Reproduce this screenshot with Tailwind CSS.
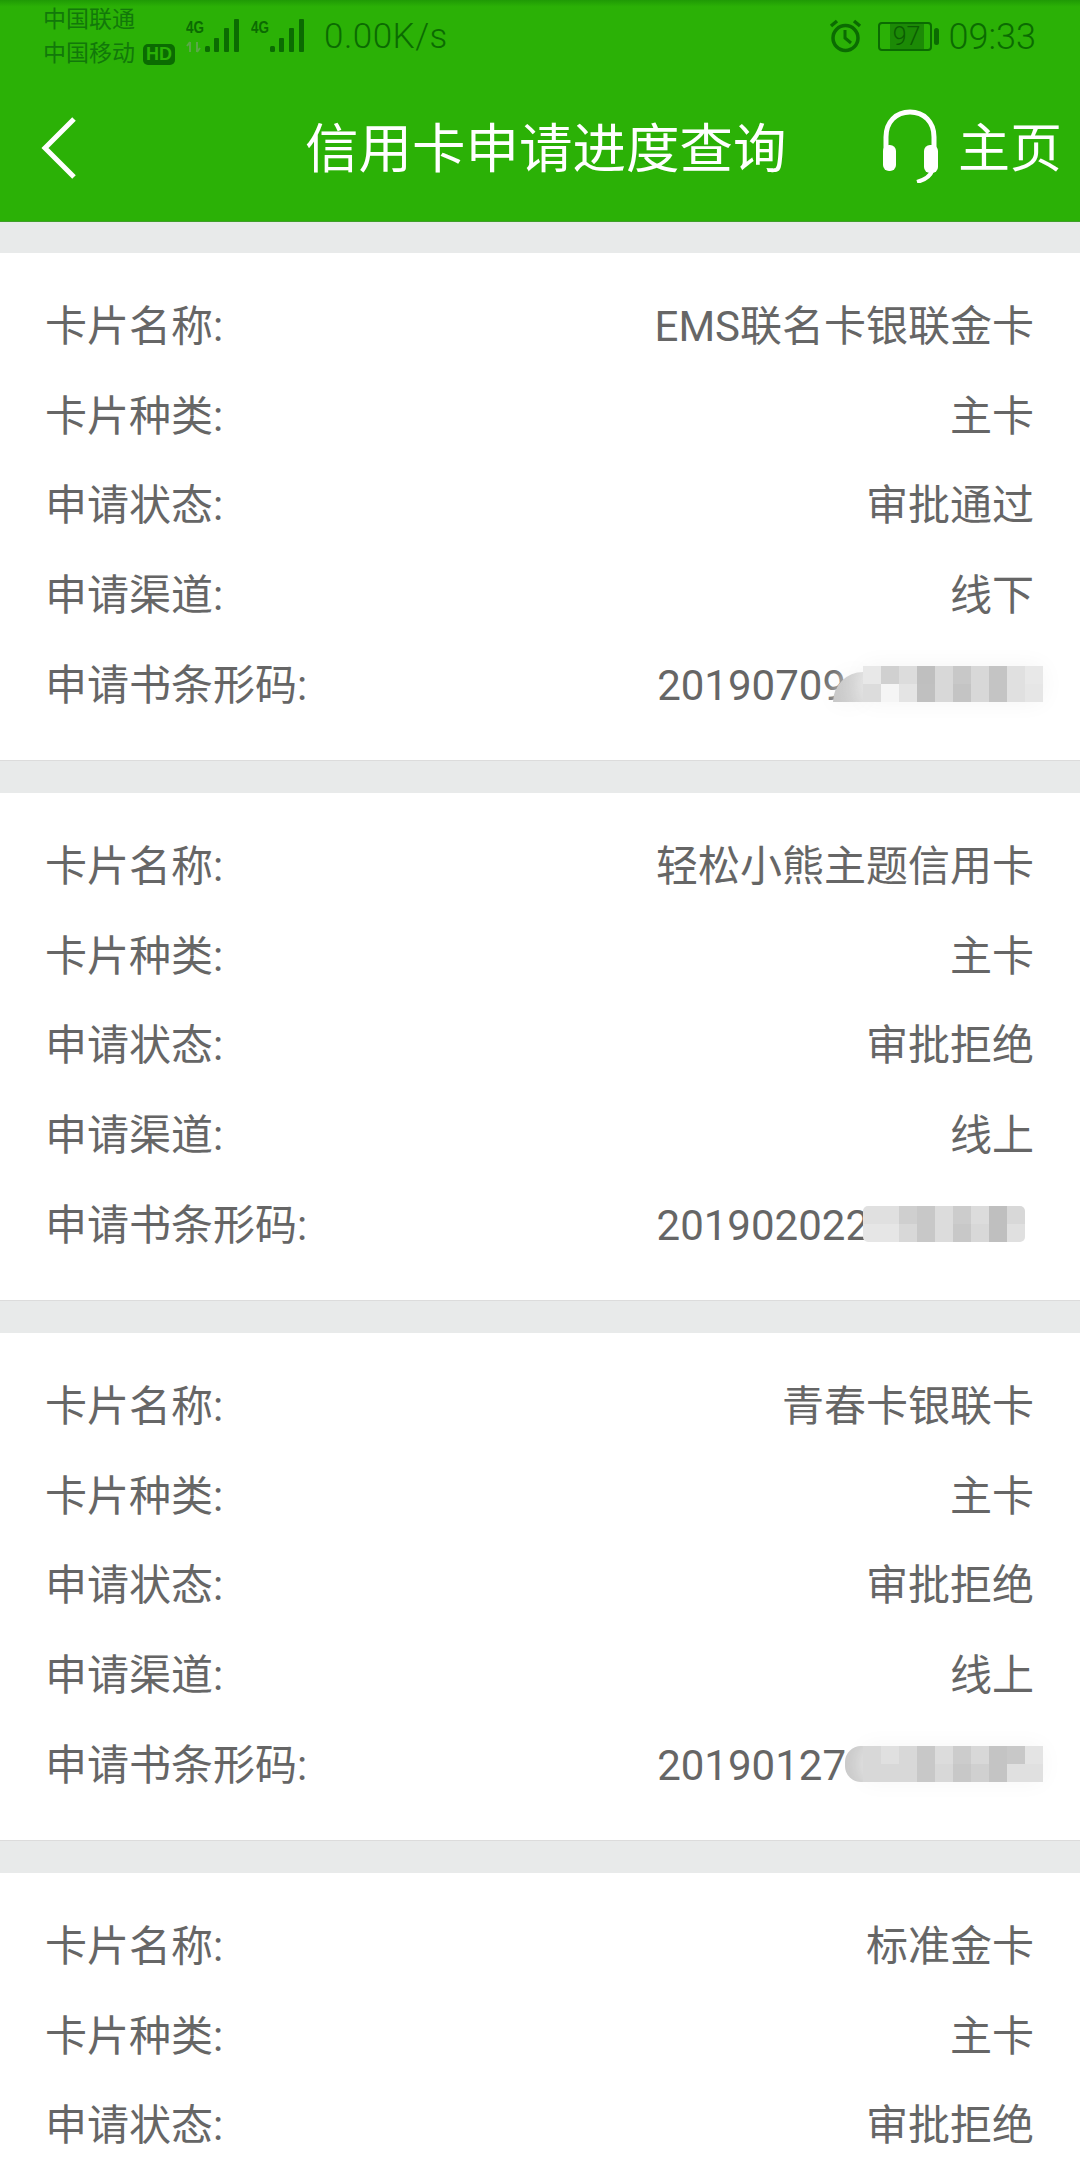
<!DOCTYPE html>
<html lang="zh-CN">
<head>
  <meta charset="UTF-8" />
  <meta name="viewport" content="width=device-width, initial-scale=1.0"/>
  <title>信用卡申请进度查询</title>
  <script src="https://cdn.jsdelivr.net/npm/@tailwindcss/browser@4"></script>
</head>
<body class="bg-[#e8eaea] h-[2160px] overflow-hidden font-['Roboto','Noto_Sans_CJK_SC',sans-serif]">

  <!-- header -->
  <header class="bg-[#2bb106] h-[222px] border-b border-[#3f9f2a] bg-gradient-to-b from-[#1f9a05] from-0% to-[#2bb106] to-[3%]">
    <!-- status bar -->
    <div class="h-[75px] flex items-start text-[#0b6b02]">
      <div class="ml-[43px] mt-[3px] flex flex-col text-[23px] leading-[34px] text-[#12780a]">
        <span>中国联通</span>
        <span class="flex items-center">中国移动
          <span class="ml-[8px] w-[32px] h-[21px] rounded-[5px] bg-[#0b6b02] text-[#2bb106] text-[18px] leading-[21px] font-bold text-center font-['Liberation_Sans',sans-serif]">HD</span>
        </span>
      </div>
      <svg class="ml-[11px] mt-[19px] shrink-0" width="53" height="34" viewBox="0 0 53 34" fill="#0b6b02">
        <text x="0" y="14" font-family="Liberation Sans" font-weight="700" font-size="17" textLength="18" lengthAdjust="spacingAndGlyphs">4G</text>
        <path d="M4 33V23M4 23l-3 4M11 23v10M11 33l3-4" fill="none" stroke="#5aa848" stroke-width="2"/>
        <rect x="19" y="27" width="5" height="6" rx="1.5"/><rect x="28" y="19" width="5" height="14" rx="1"/><rect x="38" y="9" width="5" height="24" rx="1"/><rect x="48" y="0" width="5" height="33" rx="1"/>
      </svg>
      <svg class="ml-[12px] mt-[19px] shrink-0" width="53" height="34" viewBox="0 0 53 34" fill="#0b6b02">
        <text x="0" y="14" font-family="Liberation Sans" font-weight="700" font-size="17" textLength="18" lengthAdjust="spacingAndGlyphs">4G</text>
        <rect x="19" y="27" width="5" height="6" rx="1.5"/><rect x="28" y="19" width="5" height="14" rx="1"/><rect x="38" y="9" width="5" height="24" rx="1"/><rect x="48" y="0" width="5" height="33" rx="1"/>
      </svg>
      <span class="ml-[20px] mt-[16px] text-[35px] leading-[42px] font-light tracking-[0.5px]">0.00K/s</span>
      <div class="ml-auto mr-[44px] mt-[16px] flex items-start">
        <svg class="mt-[3px] shrink-0" width="33" height="34" viewBox="0 0 33 34" fill="none" stroke="#0b6b02">
          <circle cx="16.5" cy="19" r="12.5" stroke-width="3.5"/>
          <path d="M16 11v8l6 5" stroke-width="3"/>
          <path d="M2 7l6-5M31 7l-6-5" stroke-width="3.5"/>
        </svg>
        <div class="ml-[16px] mt-[6px] w-[54px] h-[29px] rounded-[4px] border-2 border-[#0b6b02] flex items-center overflow-hidden">
          <span class="w-[34px] ml-[10px] h-full bg-[#1c8a06] text-[25px] leading-[25px] text-[#0b5c02] font-light text-center">97</span>
        </div>
        <span class="ml-[2px] mt-[12px] w-[5px] h-[17px] rounded-sm bg-[#0b6b02]"></span>
        <span class="ml-[10px] text-[36px] leading-[42px] font-light">09:33</span>
      </div>
    </div>
    <!-- nav -->
    <div class="h-[146px] flex items-center text-white">
      <svg class="ml-[41px] shrink-0" width="36" height="64" viewBox="0 0 36 64" fill="none" stroke="#fff" stroke-width="5">
        <path d="M33 3L4 32l29 29"/>
      </svg>
      <h1 class="ml-[228px] mt-[4px] w-[486px] text-[53.5px] leading-none font-normal whitespace-nowrap">信用卡申请进度查询</h1>
      <svg class="ml-[91px] mb-[4px] shrink-0" width="56" height="74" viewBox="0 0 56 74" fill="#fff">
        <path d="M4 44V28C4 13 14 3 28 3s24 10 24 25v16" fill="none" stroke="#fff" stroke-width="5"/>
        <rect x="1" y="36" width="13" height="26" rx="6"/>
        <rect x="42" y="36" width="14" height="28" rx="6"/>
        <path d="M50 62c-2 6-8 9-15 11" fill="none" stroke="#fff" stroke-width="4"/>
      </svg>
      <span class="ml-[20px] mt-[4px] text-[52px] leading-none whitespace-nowrap">主页</span>
    </div>
  </header>

  <main class="pt-[31px] flex flex-col gap-[32px] text-[42px] text-[#666666]">

    <!-- card 1 -->
    <section class="bg-white border-b border-[#dcdcdc] pt-[29px] pb-[30px] pl-[45px] pr-[46px]">
      <div class="h-[89.6px] flex items-center justify-between"><span>卡片名称:</span><span>EMS联名卡银联金卡</span></div>
      <div class="h-[89.6px] flex items-center justify-between"><span>卡片种类:</span><span>主卡</span></div>
      <div class="h-[89.6px] flex items-center justify-between"><span>申请状态:</span><span>审批通过</span></div>
      <div class="h-[89.6px] flex items-center justify-between"><span>申请渠道:</span><span>线下</span></div>
      <div class="h-[89.6px] flex items-center relative">
        <span>申请书条形码:</span>
        <span class="ml-auto mr-[188px]">20190709</span>
        <!-- redaction -->
        <div class="absolute left-[788px] top-[32px] w-[30px] h-[30px] rounded-tl-[30px] bg-gradient-to-r from-[#c8c8c8] to-[#d4d4d4] shadow-[0_0_24px_#f4f4f4]"></div>
        <div class="absolute left-[818px] top-[26px] grid grid-cols-[repeat(10,18px)] grid-rows-[18px_18px] shadow-[0_0_24px_#f4f4f4]">
          <i class="bg-[#e8e8e8]"></i><i class="bg-[#d0d0d0]"></i><i class="bg-[#dcdcdc]"></i><i class="bg-[#bfbfbf]"></i><i class="bg-[#d8d8d8]"></i><i class="bg-[#c8c8c8]"></i><i class="bg-[#d8d8d8]"></i><i class="bg-[#c4c4c4]"></i><i class="bg-[#e0e0e0]"></i><i class="bg-[#e8e8e8]"></i>
          <i class="bg-[#dcdcdc]"></i><i class="bg-[#f5f5f5]"></i><i class="bg-[#e4e4e4]"></i><i class="bg-[#c0c0c0]"></i><i class="bg-[#d8d8d8]"></i><i class="bg-[#c4c4c4]"></i><i class="bg-[#d8d8d8]"></i><i class="bg-[#c4c4c4]"></i><i class="bg-[#e0e0e0]"></i><i class="bg-[#e6e6e6]"></i>
        </div>
      </div>
    </section>

    <!-- card 2 -->
    <section class="bg-white border-b border-[#dcdcdc] pt-[29px] pb-[30px] pl-[45px] pr-[46px]">
      <div class="h-[89.6px] flex items-center justify-between"><span>卡片名称:</span><span>轻松小熊主题信用卡</span></div>
      <div class="h-[89.6px] flex items-center justify-between"><span>卡片种类:</span><span>主卡</span></div>
      <div class="h-[89.6px] flex items-center justify-between"><span>申请状态:</span><span>审批拒绝</span></div>
      <div class="h-[89.6px] flex items-center justify-between"><span>申请渠道:</span><span>线上</span></div>
      <div class="h-[89.6px] flex items-center relative">
        <span>申请书条形码:</span>
        <span class="ml-auto mr-[165px]">201902022</span>
        <div class="absolute left-[818px] top-[26px] grid grid-cols-[repeat(9,18px)] grid-rows-[18px_18px] rounded-[5px] overflow-hidden">
          <i class="bg-[#e0e0e0]"></i><i class="bg-[#e0e0e0]"></i><i class="bg-[#cfcfcf]"></i><i class="bg-[#c8c8c8]"></i><i class="bg-[#dcdcdc]"></i><i class="bg-[#cccccc]"></i><i class="bg-[#dcdcdc]"></i><i class="bg-[#bfbfbf]"></i><i class="bg-[#d8d8d8]"></i>
          <i class="bg-[#e6e6e6]"></i><i class="bg-[#e6e6e6]"></i><i class="bg-[#d8d8d8]"></i><i class="bg-[#c8c8c8]"></i><i class="bg-[#dcdcdc]"></i><i class="bg-[#c8c8c8]"></i><i class="bg-[#d8d8d8]"></i><i class="bg-[#bfbfbf]"></i><i class="bg-[#e0e0e0]"></i>
        </div>
      </div>
    </section>

    <!-- card 3 -->
    <section class="bg-white border-b border-[#dcdcdc] pt-[29px] pb-[30px] pl-[45px] pr-[46px]">
      <div class="h-[89.6px] flex items-center justify-between"><span>卡片名称:</span><span>青春卡银联卡</span></div>
      <div class="h-[89.6px] flex items-center justify-between"><span>卡片种类:</span><span>主卡</span></div>
      <div class="h-[89.6px] flex items-center justify-between"><span>申请状态:</span><span>审批拒绝</span></div>
      <div class="h-[89.6px] flex items-center justify-between"><span>申请渠道:</span><span>线上</span></div>
      <div class="h-[89.6px] flex items-center relative">
        <span>申请书条形码:</span>
        <span class="ml-auto mr-[188px]">20190127</span>
        <div class="absolute left-[800px] top-[26px] w-[18px] h-[36px] rounded-l-2xl bg-[#c8c8c8]"></div>
        <div class="absolute left-[818px] top-[26px] grid grid-cols-[repeat(10,18px)] grid-rows-[18px_18px] shadow-[0_0_24px_#f6f6f6]">
          <i class="bg-[#d8d8d8]"></i><i class="bg-[#e0e0e0]"></i><i class="bg-[#d8d8d8]"></i><i class="bg-[#c8c8c8]"></i><i class="bg-[#dcdcdc]"></i><i class="bg-[#cccccc]"></i><i class="bg-[#d8d8d8]"></i><i class="bg-[#c4c4c4]"></i><i class="bg-[#c8c8c8]"></i><i class="bg-[#e4e4e4]"></i>
          <i class="bg-[#d8d8d8]"></i><i class="bg-[#d8d8d8]"></i><i class="bg-[#d8d8d8]"></i><i class="bg-[#c8c8c8]"></i><i class="bg-[#d8d8d8]"></i><i class="bg-[#c8c8c8]"></i><i class="bg-[#d0d0d0]"></i><i class="bg-[#c4c4c4]"></i><i class="bg-[#e0e0e0]"></i><i class="bg-[#e0e0e0]"></i>
        </div>
      </div>
    </section>

    <!-- card 4 -->
    <section class="bg-white pt-[29px] pb-[30px] pl-[45px] pr-[46px]">
      <div class="h-[89.6px] flex items-center justify-between"><span>卡片名称:</span><span>标准金卡</span></div>
      <div class="h-[89.6px] flex items-center justify-between"><span>卡片种类:</span><span>主卡</span></div>
      <div class="h-[89.6px] flex items-center justify-between"><span>申请状态:</span><span>审批拒绝</span></div>
    </section>
  </main>
</body>
</html>
